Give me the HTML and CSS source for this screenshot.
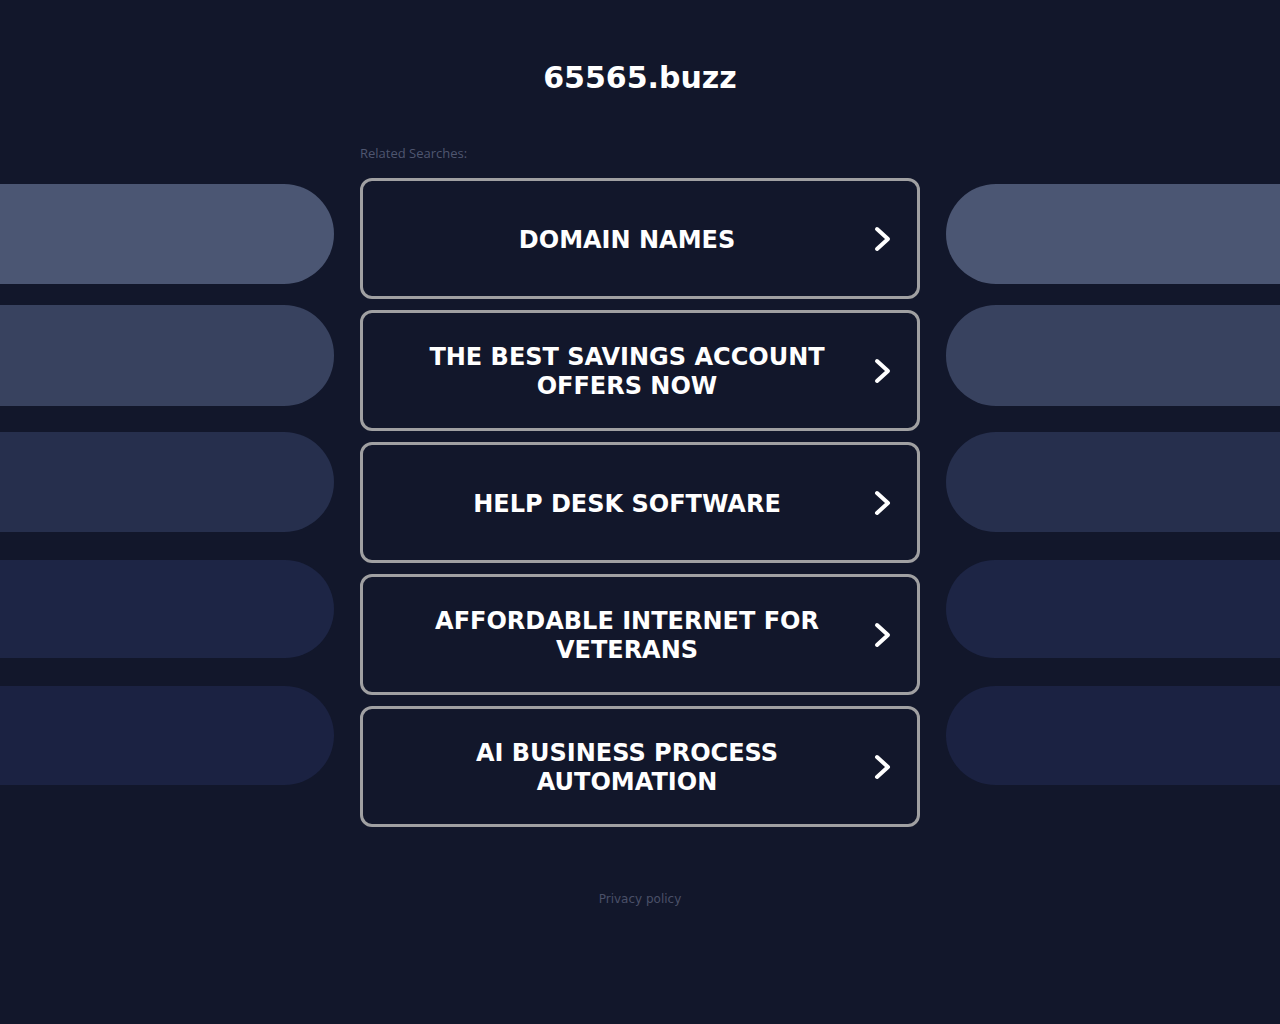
FILE: index.html
```html
<!DOCTYPE html>
<html lang="en">
<head>
  <meta charset="UTF-8">
  <title>65565.buzz</title>
  <link rel="stylesheet" href="styles.css">
</head>
<body>

  <header class="header">
    <h1 class="domain">65565.buzz</h1>
  </header>

  <div class="layout">
    <div class="side side-left">
      <div class="pill pill-1"></div>
      <div class="pill pill-2"></div>
      <div class="pill pill-3"></div>
      <div class="pill pill-4"></div>
      <div class="pill pill-5"></div>
    </div>

    <div class="center">
      <div class="related">Related Searches:</div>
      <a class="link" href="#">
        <span class="link-text">DOMAIN NAMES</span>
        <svg class="chevron" viewBox="0 0 17 26"><path d="M3 3 L14 13 L3 23"/></svg>
      </a>
      <a class="link" href="#">
        <span class="link-text">THE BEST SAVINGS ACCOUNT OFFERS NOW</span>
        <svg class="chevron" viewBox="0 0 17 26"><path d="M3 3 L14 13 L3 23"/></svg>
      </a>
      <a class="link" href="#">
        <span class="link-text">HELP DESK SOFTWARE</span>
        <svg class="chevron" viewBox="0 0 17 26"><path d="M3 3 L14 13 L3 23"/></svg>
      </a>
      <a class="link" href="#">
        <span class="link-text">AFFORDABLE INTERNET FOR VETERANS</span>
        <svg class="chevron" viewBox="0 0 17 26"><path d="M3 3 L14 13 L3 23"/></svg>
      </a>
      <a class="link" href="#">
        <span class="link-text">AI BUSINESS PROCESS AUTOMATION</span>
        <svg class="chevron" viewBox="0 0 17 26"><path d="M3 3 L14 13 L3 23"/></svg>
      </a>
    </div>

    <div class="side side-right">
      <div class="pill pill-1"></div>
      <div class="pill pill-2"></div>
      <div class="pill pill-3"></div>
      <div class="pill pill-4"></div>
      <div class="pill pill-5"></div>
    </div>
  </div>

  <footer class="footer">
    <a href="#">Privacy policy</a>
  </footer>

</body>
</html>
```

FILE: styles.css
```css
body {
  margin: 0;
  background: #12172b;
  font-family: "DejaVu Sans", sans-serif;
  color: #fff;
}

.header {
  padding-top: 60px;
  text-align: center;
}

.domain {
  margin: 0;
  font-size: 30px;
  line-height: 36px;
  font-weight: bold;
}

.layout {
  display: grid;
  grid-template-columns: 334px 560px 334px;
  column-gap: 26px;
  margin-top: 44px;
}

.side {
  display: flex;
  flex-direction: column;
  padding-top: 44px;
}

.pill {
  height: 100px;
}

.side-left .pill { border-radius: 0 50px 50px 0; }
.side-right .pill { border-radius: 50px 0 0 50px; }

.pill-1 { background: #4b5673; }
.pill-2 { background: #38425f; margin-top: 21px; height: 101px; }
.pill-3 { background: #262f4d; margin-top: 26px; }
.pill-4 { background: #1d2545; margin-top: 28px; height: 98px; }
.pill-5 { background: #1b2242; margin-top: 28px; height: 99px; }

.center {
  padding-top: 4px;
}

.related {
  font-family: "Open Sans", sans-serif;
  font-size: 13px;
  line-height: 18px;
  color: #4f5670;
  margin-bottom: 16px;
}

.link {
  display: flex;
  align-items: center;
  box-sizing: border-box;
  height: 121px;
  margin-bottom: 11px;
  border: 3px solid #a0a0a2;
  border-radius: 12px;
  text-decoration: none;
  color: #fff;
}

.link-text {
  flex: 1;
  padding: 3px 0 0 44px;
  text-align: center;
  font-size: 24px;
  font-weight: bold;
  line-height: 29px;
}

.chevron {
  width: 17px;
  height: 26px;
  margin: 0 26px 0 27px;
  fill: none;
  stroke: #fff;
  stroke-width: 4;
  stroke-linecap: round;
  stroke-linejoin: round;
}

.footer {
  text-align: center;
  margin-top: 54px;
  font-size: 12px;
}

.footer a {
  color: #4a5068;
  text-decoration: none;
}
```
